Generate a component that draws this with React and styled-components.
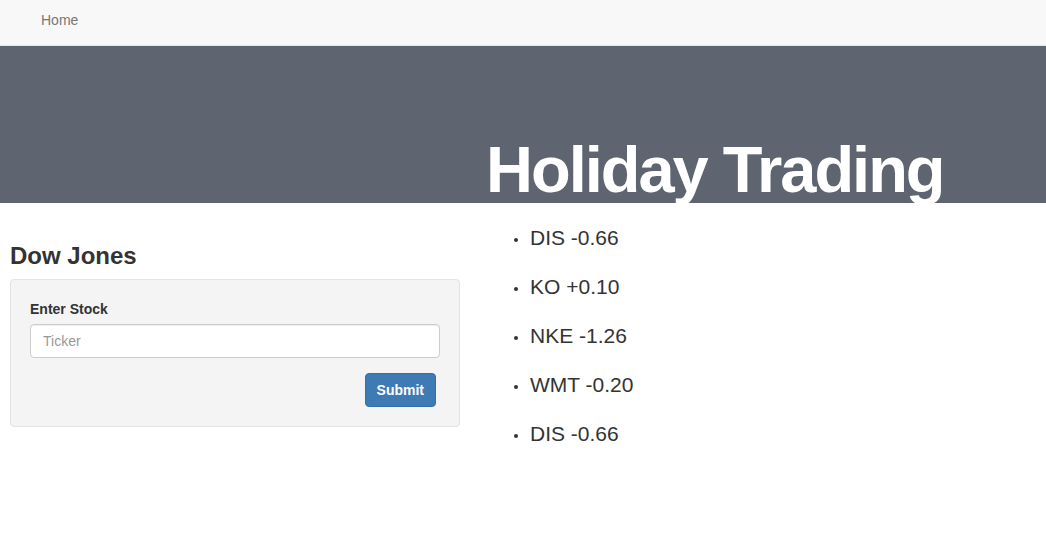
import React from "react";
import styled, { createGlobalStyle } from "styled-components";

const GlobalStyle = createGlobalStyle`
  * {
    box-sizing: border-box;
  }

  body {
    margin: 0;
    background-color: #fff;
    color: #333;
    font-family: "Liberation Sans", Arial, sans-serif;
    font-size: 14px;
    line-height: 20px;
  }
`;

const Navbar = styled.nav`
  height: 46px;
  background-color: #f8f8f8;
  border-bottom: 1px solid #e7e7e7;
  padding: 10px 0 0 41px;
`;

const NavLink = styled.a`
  color: #777;
  text-decoration: none;
  font-size: 14px;
  line-height: 20px;
`;

const Jumbotron = styled.header`
  height: 157px;
  background-color: #5e6570;
  padding: 91px 0 0 486px;
`;

const Title = styled.h1`
  margin: 0;
  color: #fff;
  font-size: 65px;
  line-height: 65px;
  font-weight: bold;
  letter-spacing: -2px;
  white-space: nowrap;
`;

const Main = styled.main`
  display: flex;
  padding: 0 10px;
`;

const LeftColumn = styled.section`
  width: 450px;
`;

const RightColumn = styled.section`
  margin-left: 30px;
`;

const Heading = styled.h3`
  margin: 40px 0 10px;
  font-size: 24px;
  line-height: 26.4px;
  font-weight: 600;
  color: #333;
`;

const Well = styled.form`
  background-color: #f4f4f4;
  border: 1px solid #e3e3e3;
  border-radius: 4px;
  padding: 19px;
  display: flex;
  flex-direction: column;
`;

const FormGroup = styled.div`
  display: flex;
  flex-direction: column;
  margin-bottom: 15px;
`;

const Label = styled.label`
  font-weight: bold;
  margin-bottom: 5px;
`;

const Input = styled.input`
  height: 34px;
  padding: 6px 12px;
  border: 1px solid #ccc;
  border-radius: 4px;
  font-family: inherit;
  font-size: 14px;
  color: #555;
  background-color: #fff;
  box-shadow: inset 0 1px 1px rgba(0, 0, 0, 0.075);

  &::placeholder {
    color: #999;
  }
`;

const Button = styled.button`
  align-self: flex-end;
  margin-right: 4px;
  height: 34px;
  padding: 0 11px;
  border: 1px solid #3470a8;
  border-radius: 4px;
  background-color: #3e7ab4;
  color: #fff;
  font-family: inherit;
  font-size: 14px;
  font-weight: bold;
  cursor: pointer;
`;

const StockList = styled.ul`
  list-style: none;
  margin: 24px 0 0;
  padding: 0 0 0 24px;
`;

const StockItem = styled.li`
  display: flex;
  align-items: center;
  font-size: 21px;
  line-height: 22px;
  margin-bottom: 27px;
  color: #333;
`;

const Dot = styled.span`
  width: 4px;
  height: 4px;
  border-radius: 50%;
  background-color: #333;
  margin: 4px 12px 0 0;
`;

const stocks = [
  { ticker: "DIS", change: "-0.66" },
  { ticker: "KO", change: "+0.10" },
  { ticker: "NKE", change: "-1.26" },
  { ticker: "WMT", change: "-0.20" },
  { ticker: "DIS", change: "-0.66" },
];

const App = () => {
  return (
    <>
      <GlobalStyle />
      <Navbar>
        <NavLink href="#">Home</NavLink>
      </Navbar>
      <Jumbotron>
        <Title>Holiday Trading</Title>
      </Jumbotron>
      <Main>
        <LeftColumn>
          <Heading>Dow Jones</Heading>
          <Well onSubmit={(e) => e.preventDefault()}>
            <FormGroup>
              <Label>Enter Stock</Label>
              <Input name="ticker" placeholder="Ticker" />
            </FormGroup>
            <Button type="submit">Submit</Button>
          </Well>
        </LeftColumn>
        <RightColumn>
          <StockList>
            {stocks.map((s, i) => (
              <StockItem key={i}>
                <Dot />
                {s.ticker} {s.change}
              </StockItem>
            ))}
          </StockList>
        </RightColumn>
      </Main>
    </>
  );
};

export default App;
